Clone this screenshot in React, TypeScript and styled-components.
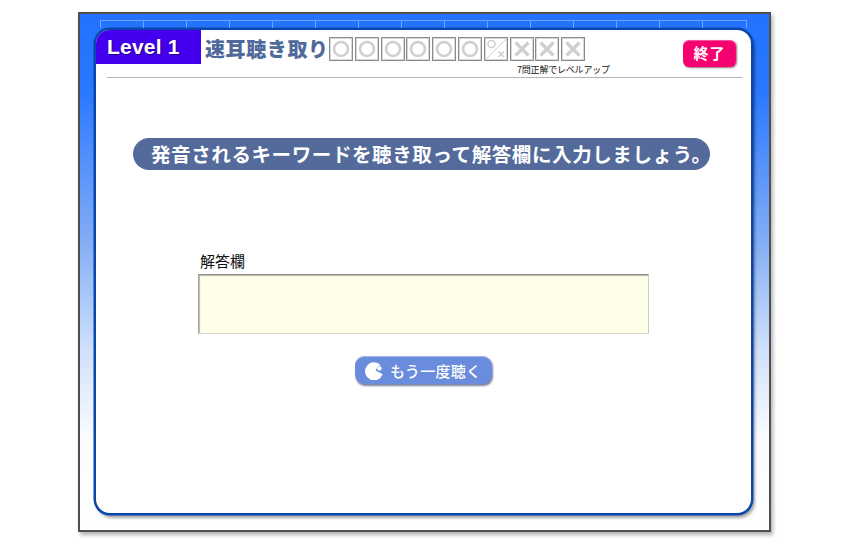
import React from "react";
import styled, { createGlobalStyle } from "styled-components";

const GlobalStyle = createGlobalStyle`
  html, body {
    margin: 0;
    padding: 0;
    background: #fff;
  }
  body {
    font-family: "Noto Sans CJK JP", "Liberation Sans", sans-serif;
  }
`;

type MarkKind = "ok" | "half" | "ng";

const marks: MarkKind[] = ["ok", "ok", "ok", "ok", "ok", "ok", "half", "ng", "ng", "ng"];
const ticks = Array.from({ length: 15 });

function Mark({ kind }: { kind: MarkKind }) {
  return (
    <svg width="20" height="20" viewBox="0 0 20 20" fill="none" stroke="#cfcfcf">
      {kind === "ok" && <circle cx="10" cy="10" r="7" strokeWidth="2.6" />}
      {kind === "ng" && <path d="M3.5 3.5 L16.5 16.5 M16.5 3.5 L3.5 16.5" strokeWidth="3.2" />}
      {kind === "half" && (
        <>
          <circle cx="5.5" cy="5" r="3.6" strokeWidth="1.5" />
          <path d="M0 20 L20 0" strokeWidth="1" />
          <path d="M12.5 12.5 L18 18 M18 12.5 L12.5 18" strokeWidth="1.6" />
        </>
      )}
    </svg>
  );
}

function Pacman() {
  return (
    <svg width="20" height="20" viewBox="0 0 20 20">
      <path d="M16.5 5 A9 9 0 1 0 18.6 14.2 L11.5 10.6 L13.2 7.4 Z" fill="#fff" />
      <circle cx="15.4" cy="8.4" r="2.2" fill="#fff" />
    </svg>
  );
}

export default function App() {
  return (
    <S.Page>
      <GlobalStyle />
      <S.Frame>
        <S.Ruler>
          {ticks.map((_, i) => (
            <S.Tick key={i} />
          ))}
        </S.Ruler>
        <S.Panel>
          <S.Header>
            <S.LevelTab>Level 1</S.LevelTab>
            <S.Title>速耳聴き取り</S.Title>
            <S.Progress>
              <S.MarkRow>
                {marks.map((kind, i) => (
                  <S.MarkBox key={i}>
                    <Mark kind={kind} />
                  </S.MarkBox>
                ))}
              </S.MarkRow>
              <S.Caption>7問正解でレベルアップ</S.Caption>
            </S.Progress>
            <S.EndButton>終了</S.EndButton>
          </S.Header>
          <S.Divider />
          <S.Instruction>発音されるキーワードを聴き取って解答欄に入力しましょう。</S.Instruction>
          <S.AnswerArea>
            <S.AnswerLabel>解答欄</S.AnswerLabel>
            <S.AnswerBox />
          </S.AnswerArea>
          <S.ReplayButton>
            <Pacman />
            <span>もう一度聴く</span>
          </S.ReplayButton>
        </S.Panel>
      </S.Frame>
    </S.Page>
  );
}

const S = {
  Page: styled.div`
    width: 848px;
    height: 544px;
    box-sizing: border-box;
    padding: 12px 0 0 78px;
    overflow: hidden;
  `,
  Frame: styled.div`
    width: 693px;
    height: 520px;
    box-sizing: border-box;
    padding: 6px 16px 0 14px;
    border: 2px solid #4f4f4f;
    background: linear-gradient(180deg, #2272ff 0%, #2a78ff 15%, #86aff5 45%, #cfe0fb 65%, #fafcff 82%, #ffffff 100%);
    box-shadow: 2px 3px 4px rgba(0, 0, 0, 0.3);
  `,
  Ruler: styled.div`
    display: flex;
    height: 8px;
    width: 647px;
    margin-left: 6px;
    overflow: hidden;
    box-sizing: border-box;
    border-top: 1px solid #6fa3ff;
    border-right: 1px solid #6fa3ff;
  `,
  Tick: styled.div`
    flex: 0 0 43px;
    box-sizing: border-box;
    border-left: 1px solid #6fa3ff;
  `,
  Panel: styled.div`
    width: 659px;
    height: 487px;
    box-sizing: border-box;
    display: flex;
    flex-direction: column;
    background: #fff;
    border: 2px solid #0a47ab;
    border-radius: 16px;
    overflow: hidden;
    box-shadow: 0 0 0 0.5px #0a47ab, 2px 3px 3px rgba(0, 0, 0, 0.35);
  `,
  Header: styled.div`
    display: flex;
    align-items: flex-start;
    height: 47px;
    flex: none;
  `,
  LevelTab: styled.div`
    width: 105px;
    height: 34px;
    box-sizing: border-box;
    padding-left: 11px;
    background: #4400ee;
    color: #fff;
    font: bold 21px/34px "Liberation Sans", sans-serif;
    letter-spacing: 0.2px;
    text-shadow: 1px 1px 1px rgba(0, 0, 40, 0.5);
  `,
  Title: styled.div`
    margin: 5px 0 0 4px;
    width: 124px;
    color: #4f6a9a;
    font-size: 20px;
    font-weight: 900;
    line-height: 28px;
    letter-spacing: 0.6px;
    white-space: nowrap;
  `,
  Progress: styled.div`
    display: flex;
    flex-direction: column;
    margin: 7px 0 0 0;
    width: 354px;
  `,
  MarkRow: styled.div`
    display: flex;
    gap: 1.8px;
  `,
  MarkBox: styled.div`
    width: 24px;
    height: 24px;
    box-sizing: border-box;
    display: flex;
    align-items: center;
    justify-content: center;
    border: 1px solid #8a8a8a;
    box-shadow: inset 0 0 0 1px #d8d8d8;
    background: #fff;
  `,
  Caption: styled.div`
    margin: 3px 0 0 188px;
    font-size: 9px;
    line-height: 12px;
    letter-spacing: -0.2px;
    color: #111;
    white-space: nowrap;
  `,
  EndButton: styled.div`
    margin: 10px 0 0 0;
    width: 53px;
    height: 27px;
    box-sizing: border-box;
    border-radius: 6px;
    background: #f4006f;
    box-shadow: 1px 1px 2px rgba(90, 0, 40, 0.6), inset 0 1px 1px rgba(255, 255, 255, 0.35);
    color: #fff;
    font-size: 15px;
    font-weight: 700;
    line-height: 26px;
    text-align: center;
    letter-spacing: 1px;
  `,
  Divider: styled.div`
    flex: none;
    height: 1px;
    margin: 0 9px 0 11px;
    background: #b4b4b4;
  `,
  Instruction: styled.div`
    flex: none;
    align-self: flex-start;
    margin: 60px 0 0 37px;
    width: 577px;
    height: 32px;
    box-sizing: border-box;
    padding-left: 18px;
    border-radius: 16px;
    background: #536a9b;
    color: #fff;
    font-size: 19.5px;
    font-weight: 700;
    line-height: 31px;
    letter-spacing: 0.6px;
    white-space: nowrap;
  `,
  AnswerArea: styled.div`
    flex: none;
    margin: 81px 0 0 102px;
    width: 451px;
  `,
  AnswerLabel: styled.div`
    padding-left: 2px;
    height: 23px;
    color: #111;
    font-size: 15px;
    line-height: 20px;
  `,
  AnswerBox: styled.div`
    height: 60px;
    box-sizing: border-box;
    background: #fefee9;
    border: 1px solid;
    border-color: #8c8c80 #cfcfc4 #d8d8cc #a4a498;
    box-shadow: inset 1px 1px 1px #b8b8a8;
  `,
  ReplayButton: styled.div`
    flex: none;
    align-self: flex-start;
    margin: 22px 0 0 259px;
    width: 137px;
    height: 28px;
    box-sizing: border-box;
    display: flex;
    align-items: center;
    gap: 6px;
    padding-left: 9px;
    border-radius: 9px;
    background: #6a8cdc;
    box-shadow: 1px 2px 2px rgba(40, 50, 90, 0.6), inset 0 1px 1px rgba(255, 255, 255, 0.4);
    color: #fff;
    font-size: 15px;
    font-weight: 500;
    letter-spacing: 0.3px;
    white-space: nowrap;
  `,
};
